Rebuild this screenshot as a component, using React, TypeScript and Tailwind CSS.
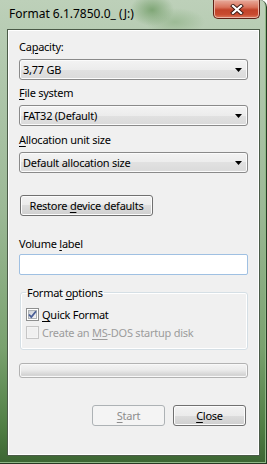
import type { ReactNode } from 'react'

const ui = "font-['Noto_Sans',sans-serif] text-[11px] leading-[15px] tracking-[-0.25px] text-black"

function Mn({ children }: { children: ReactNode }) {
  return <span className="underline decoration-1 underline-offset-[2px]">{children}</span>
}

function Arrow() {
  return (
    <svg width="7" height="4" viewBox="0 0 7 4" className="shrink-0">
      <path d="M0 0h7L3.5 4z" fill="#000" />
    </svg>
  )
}

function Combo({ value, className = '' }: { value: string; className?: string }) {
  return (
    <div
      className={`flex h-[21px] items-center justify-between rounded-[3px] border border-[#8a8a8a] bg-[linear-gradient(#f3f3f3_0%,#ececec_50%,#e1e1e1_50%,#dadada_100%)] pl-[3px] pr-[5px] shadow-[inset_0_0_0_1px_#fbfbfb] ${className}`}
    >
      <span>{value}</span>
      <Arrow />
    </div>
  )
}

function Label({ children, className = '' }: { children: ReactNode; className?: string }) {
  return <div className={`h-[15px] ${className}`}>{children}</div>
}

function CheckBox({ checked, disabled }: { checked?: boolean; disabled?: boolean }) {
  return (
    <div
      className={`flex size-[13px] shrink-0 items-center justify-center border ${
        disabled ? 'border-[#c6c6c6] bg-[#f4f4f4]' : 'border-[#8e8f8f] bg-white'
      }`}
    >
      <div
        className={`relative size-[9px] ${
          disabled
            ? 'bg-[#f0f0f0]'
            : 'border border-[#adb2b5] bg-[linear-gradient(135deg,#cbcfd5,#f6f6f6)]'
        }`}
      >
        {checked && (
          <svg width="11" height="11" viewBox="0 0 11 11" className="absolute -left-[2px] -top-[2px]">
            <path d="M2 5.5l2.3 2.6L9 2.2" fill="none" stroke="#4a5f97" strokeWidth="1.8" />
          </svg>
        )}
      </div>
    </div>
  )
}

export default function App() {
  return (
    <div
      className={`${ui} flex h-[464px] w-[267px] flex-col overflow-hidden rounded-tr-[7px] border-r border-b border-[#263a23] bg-[radial-gradient(ellipse_22px_16px_at_152px_10px,#7fa676,transparent),radial-gradient(ellipse_30px_14px_at_175px_22px,#9dbb96,transparent),linear-gradient(180deg,#bdd0b9_0%,#b1c8ad_15%,#9cb996_45%,#7aa26f_75%,#517f45_92%,#3c6532_100%)] shadow-[inset_-1px_-1px_0_#8fb887]`}
    >
      <div className="relative h-[29px] shrink-0 pl-[9px] pt-[6px] text-[12px] tracking-normal">
        Format 6.1.7850.0_ (J:)
        <div className="absolute right-[6px] top-0 flex h-[19px] w-[47px] items-center justify-center rounded-b-[5px] border border-t-0 border-[#5e2116] bg-[linear-gradient(180deg,#e8ab9c_0%,#d9735c_40%,#c2432a_55%,#c84a2f_80%,#dc7b5e_100%)] shadow-[inset_0_0_0_1px_#eab4a5]">
          <svg width="14" height="11" viewBox="0 0 14 11">
            <path d="M3 2l8 7M11 2l-8 7" stroke="#3d1b14" strokeWidth="4" strokeLinecap="square" />
            <path d="M3 2l8 7M11 2l-8 7" stroke="#fff" strokeWidth="2.2" strokeLinecap="square" />
          </svg>
        </div>
      </div>

      <div className="mb-[7px] ml-[7px] mr-[6px] flex flex-1 flex-col border border-[#4b5b48] bg-[#f0f0f0] pl-[11px] pr-[11px] shadow-[inset_1px_1px_0_#ffffff,inset_-1px_-1px_0_#ffffff]">
        <Label className="mt-[9px]">
          Ca<Mn>p</Mn>acity:
        </Label>
        <Combo value="3,77 GB" className="mt-[5px]" />

        <Label className="mt-[5px]">
          <Mn>F</Mn>ile system
        </Label>
        <Combo value="FAT32 (Default)" className="mt-[5px]" />

        <Label className="mt-[6px]">
          <Mn>A</Mn>llocation unit size
        </Label>
        <Combo value="Default allocation size" className="mt-[5px]" />

        <button
          type="button"
          className="ml-[1px] mt-[22px] h-[21px] w-[133px] rounded-[3px] border border-[#707070] bg-[linear-gradient(#f2f2f2_0%,#ebebeb_50%,#dddddd_50%,#cfcfcf_100%)] text-center shadow-[inset_0_0_0_1px_#fcfcfc]"
        >
          Restore <Mn>d</Mn>evice defaults
        </button>

        <Label className="mt-[20px]">
          Volume <Mn>l</Mn>abel
        </Label>
        <div className="mt-[3px] h-[21px] rounded-[2px] border border-[#9fc0e2] bg-white" />

        <fieldset className="ml-[1px] mt-[10px] rounded-[3px] border border-[#d5dfe5] pb-[9px] pl-[5px] shadow-[inset_0_0_0_1px_#ffffff]">
          <legend className="px-[1px]">
            Format <Mn>o</Mn>ptions
          </legend>
          <div className="mt-[7px] flex h-[15px] items-center gap-[3px]">
            <CheckBox checked />
            <span>
              <Mn>Q</Mn>uick Format
            </span>
          </div>
          <div className="mt-[3px] flex h-[15px] items-center gap-[3px] text-[#9c9c9c]">
            <CheckBox disabled />
            <span>
              Create an <Mn>MS</Mn>-DOS startup disk
            </span>
          </div>
        </fieldset>

        <div className="mt-[13px] h-[15px] rounded-[3px] border border-[#b2b2b2] bg-[linear-gradient(#f4f4f4_0%,#ebebeb_45%,#dcdcdc_70%,#d2d2d2_85%,#e2e2e2_100%)] shadow-[inset_0_0_0_1px_#f8f8f8]" />

        <div className="mr-[2px] mt-[27px] flex justify-end gap-[8px]">
          <button
            type="button"
            className="h-[21px] w-[73px] rounded-[3px] border border-[#adb2b5] bg-[#f4f4f4] text-[#8d8d8d]"
          >
            <Mn>S</Mn>tart
          </button>
          <button
            type="button"
            className="h-[21px] w-[73px] rounded-[3px] border border-[#707070] bg-[linear-gradient(#f2f2f2_0%,#ebebeb_50%,#dddddd_50%,#cfcfcf_100%)] shadow-[inset_0_0_0_1px_#fcfcfc]"
          >
            <Mn>C</Mn>lose
          </button>
        </div>
      </div>
    </div>
  )
}
